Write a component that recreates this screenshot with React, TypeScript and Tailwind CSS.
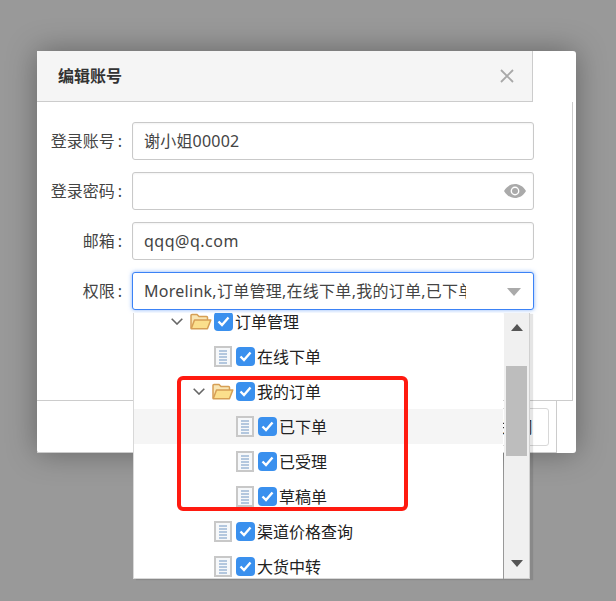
import React from 'react';

const FONT = "font-['Noto_Sans','Noto_Sans_CJK_SC',sans-serif]";

const Chevron = () => (
  <svg width="12" height="7" viewBox="0 0 12 7" className="shrink-0">
    <path d="M0.7 0.7l5.3 5.3 5.3-5.3" fill="none" stroke="#666" strokeWidth="1.6" />
  </svg>
);

const FolderIcon = () => (
  <svg width="22" height="17" viewBox="0 0 22 17" className="shrink-0">
    <path d="M1 15.5V2.5a1 1 0 0 1 1-1h5l2 2h7.5a1 1 0 0 1 1 1V7" fill="#f9e6b4" stroke="#d69f55" strokeWidth="1.5" />
    <path d="M1.2 15.8L4.5 7h16.3l-3.4 8.8z" fill="#fbdf8c" stroke="#d69f55" strokeWidth="1.5" strokeLinejoin="round" />
  </svg>
);

const DocIcon = () => (
  <div className="w-[18px] h-[21px] shrink-0 bg-[#f6f8fa] border-2 border-[#c8c8c8] flex flex-col justify-center gap-[1px] px-[3px]">
    <div className="h-[2px] bg-[#b3c7de]" />
    <div className="h-[2px] bg-[#b3c7de]" />
    <div className="h-[2px] bg-[#b3c7de]" />
    <div className="h-[2px] bg-[#b3c7de]" />
    <div className="h-[2px] bg-[#b3c7de]" />
  </div>
);

const Check = () => (
  <div className="w-[19px] h-[19px] shrink-0 rounded-[4px] bg-[#3a90ee] flex items-center justify-center">
    <svg width="13" height="11" viewBox="0 0 13 11">
      <path d="M1.5 5.5l3.5 3.5 6.5-7.5" fill="none" stroke="#fff" strokeWidth="2.4" />
    </svg>
  </div>
);

const rows = [
  { label: '订单管理', pl: 'pl-[37px]', folder: true },
  { label: '在线下单', pl: 'pl-[80px]', folder: false },
  { label: '我的订单', pl: 'pl-[59px]', folder: true },
  { label: '已下单', pl: 'pl-[102px]', folder: false, hover: true },
  { label: '已受理', pl: 'pl-[102px]', folder: false },
  { label: '草稿单', pl: 'pl-[102px]', folder: false },
  { label: '渠道价格查询', pl: 'pl-[80px]', folder: false },
  { label: '大货中转', pl: 'pl-[80px]', folder: false },
];

const Field = ({ label, children }: { label: string; children: React.ReactNode }) => (
  <div className="flex items-center h-[38px]">
    <label className="w-[85px] text-right text-[16px] text-[#444] whitespace-nowrap">
      {label}
      <span className="ml-[3px]">:</span>
    </label>
    {children}
  </div>
);

const inputCls =
  'relative ml-[10px] w-[402px] h-[38px] border rounded-[3px] bg-white px-[11px] flex items-center text-[16px] text-[#444]';

export default function App() {
  return (
    <div className={`${FONT} relative w-[616px] h-[601px] overflow-hidden bg-[#999999] pt-[51px] pl-[37px]`}>
      {/* dialog */}
      <div className="w-[539px] h-[402px] bg-white rounded-[3px] shadow-[0_0_30px_rgba(0,0,0,0.35)] flex flex-col">
        <div className="w-[496px] h-[51px] shrink-0 bg-[#f5f5f5] border-b border-r border-[#cccccc] flex items-center justify-between pl-[21px] pr-[17px]">
          <span className="text-[16px] font-bold text-[#333]">编辑账号</span>
          <svg width="16" height="16" viewBox="0 0 16 16">
            <path d="M2 2l12 12M14 2L2 14" stroke="#a8a8a8" strokeWidth="1.8" />
          </svg>
        </div>

        <div className="w-[536px] h-[299px] shrink-0 border-r border-b border-[#cccccc] pt-[20px] flex flex-col gap-[12px]">
          <Field label="登录账号">
            <div className={`${inputCls} border-[#c9c9c9] tracking-[0.2px] shadow-[inset_0_1px_2px_rgba(0,0,0,0.05)]`}>谢小姐00002</div>
          </Field>
          <Field label="登录密码">
            <div className={`${inputCls} border-[#c9c9c9] shadow-[inset_0_1px_2px_rgba(0,0,0,0.05)]`}>
              <svg width="24" height="16" viewBox="0 0 24 16" className="absolute right-[6px] top-[10px]">
                <path
                  fillRule="evenodd"
                  d="M1 8C4 3 8 1 12 1s8 2 11 7c-3 5-7 7-11 7S4 13 1 8zm11-4.4a4.4 4.4 0 1 0 0 8.8 4.4 4.4 0 0 0 0-8.8z"
                  fill="#aaaaaa"
                />
                <circle cx="12" cy="8" r="3" fill="#aaaaaa" />
              </svg>
            </div>
          </Field>
          <Field label="邮箱">
            <div className={`${inputCls} border-[#c9c9c9] tracking-[0.5px] shadow-[inset_0_1px_2px_rgba(0,0,0,0.05)]`}>qqq@q.com</div>
          </Field>
          <Field label="权限">
            <div className={`${inputCls} border-[#3b82f6] shadow-[0_0_4px_rgba(59,130,246,0.6)]`}>
              <span className="w-[322px] overflow-hidden whitespace-nowrap tracking-[0.27px]">Morelink,订单管理,在线下单,我的订单,已下单,已受理</span>
              <svg width="14" height="8" viewBox="0 0 14 8" className="absolute right-[12px] top-[15px]">
                <path d="M0 0h14L7 8z" fill="#aaaaaa" />
              </svg>
            </div>
          </Field>
        </div>

        <div className="w-[520px] grow border-r border-b border-[#cccccc] flex justify-end items-center pr-[7px]">
          <div className="w-[62px] h-[38px] border border-[#d8d8d8] rounded-[3px] pr-[3px] flex items-center justify-center text-[16px] text-[#333]">
            关闭
          </div>
        </div>
      </div>

      {/* tree dropdown */}
      <div className="absolute left-[133px] top-[313px] w-[397px] h-[266px] flex gap-[1px] shadow-[3px_1px_1px_rgba(0,0,0,0.1)]">
        <div className="w-[370px] h-full overflow-hidden bg-white border-l border-b border-[#d8d8d8]">
          <div className="-mt-[9px]">
            {rows.map(r => (
              <div
                key={r.label}
                className={`h-[35px] flex items-center ${r.pl} ${r.hover ? 'bg-[#f5f5f5]' : ''}`}
              >
                {r.folder && (
                  <span className="mr-[7px] flex">
                    <Chevron />
                  </span>
                )}
                {r.folder ? <FolderIcon /> : <DocIcon />}
                <span className={r.folder ? 'ml-[2px]' : 'ml-[4px]'}>
                  <Check />
                </span>
                <span className="ml-[2px] text-[16px] text-[#222] whitespace-nowrap">{r.label}</span>
              </div>
            ))}
          </div>
        </div>
        <div className="w-[26px] h-full bg-[#f0f0f0] border-r border-b border-[#d0d0d0] flex flex-col items-center justify-between relative py-[11px]">
          <svg width="12" height="7" viewBox="0 0 12 7"><path d="M6 0l6 7H0z" fill="#555" /></svg>
          <div className="absolute left-[2px] top-[53px] w-[21px] h-[90px] bg-[#bdbdbd]" />
          <svg width="12" height="7" viewBox="0 0 12 7"><path d="M0 0h12L6 7z" fill="#555" /></svg>
        </div>
      </div>

      {/* red annotation */}
      <div className="absolute left-[177px] top-[376px] w-[231px] h-[135px] border-[4px] border-[#ff1a10] rounded-[6px]" />
    </div>
  );
}
